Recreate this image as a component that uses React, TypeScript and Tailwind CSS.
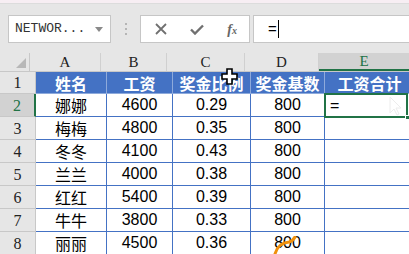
import React from "react";

const rows = [
  { name: "娜娜", pay: "4600", rate: "0.29", base: "800" },
  { name: "梅梅", pay: "4800", rate: "0.35", base: "800" },
  { name: "冬冬", pay: "4100", rate: "0.43", base: "800" },
  { name: "兰兰", pay: "4000", rate: "0.38", base: "800" },
  { name: "红红", pay: "5400", rate: "0.39", base: "800" },
  { name: "牛牛", pay: "3800", rate: "0.33", base: "800" },
  { name: "丽丽", pay: "4500", rate: "0.36", base: "800" },
];

const headers = ["姓名", "工资", "奖金比例", "奖金基数", "工资合计"];
const letters = ["A", "B", "C", "D", "E"];
const widths = ["w-[71px]", "w-[66px]", "w-[78px]", "w-[74px]", "w-[90px]"];

const cjk = { fontFamily: '"Noto Sans CJK SC", "Noto Sans", sans-serif' };
const mono = { fontFamily: '"Liberation Mono", "DejaVu Sans Mono", monospace' };
const serif = { fontFamily: '"Liberation Serif", "DejaVu Serif", serif' };
const arial = { fontFamily: '"Liberation Sans", Arial, sans-serif' };

function Toolbar() {
  return (
    <div className="h-[53px] bg-[#e6e6e6]">
      <div className="h-[4px] bg-[#f7eef3] border-b border-[#dcdcdc]" />
      <div className="flex items-start pt-[11px]">
        {/* name box */}
        <div className="ml-[8px] flex h-[28px] w-[103px] items-center justify-between border border-[#c6c6c6] bg-white pl-[6px] pr-[7px]">
          <span className="text-[13px] text-[#333]" style={mono}>
            NETWOR...
          </span>
          <svg width="8" height="5" viewBox="0 0 8 5">
            <path d="M0 0 L8 0 L4 5 Z" fill="#8a8a8a" />
          </svg>
        </div>
        {/* grip dots */}
        <div className="ml-[14px] mt-[8px] flex flex-col gap-[3px]">
          <span className="h-[2px] w-[2px] bg-[#b5b5b5]" />
          <span className="h-[2px] w-[2px] bg-[#b5b5b5]" />
          <span className="h-[2px] w-[2px] bg-[#b5b5b5]" />
        </div>
        {/* x / check / fx */}
        <div className="ml-[13px] flex h-[28px] w-[110px] items-center justify-between border border-[#c6c6c6] bg-white pl-[14px] pr-[12px]">
          <svg width="12" height="12" viewBox="0 0 12 12">
            <path d="M1 1 L11 11 M11 1 L1 11" stroke="#707070" strokeWidth="1.8" />
          </svg>
          <svg width="14" height="11" viewBox="0 0 14 11">
            <path d="M1 5.5 L5 9.5 L13 1.5" stroke="#707070" strokeWidth="2.4" fill="none" />
          </svg>
          <span className="text-[14px] font-bold italic text-[#666]" style={serif}>
            f<span className="text-[10px]">x</span>
          </span>
        </div>
        {/* formula bar */}
        <div className="ml-[3px] flex h-[28px] flex-1 items-center border border-r-0 border-[#c6c6c6] bg-white pl-[14px]">
          <span className="text-[15px] text-black" style={arial}>
            =
          </span>
          <span className="ml-[1px] h-[18px] w-[1px] bg-black" />
        </div>
      </div>
    </div>
  );
}

function ColumnHeader() {
  return (
    <div className="flex h-[19px] border-b border-[#c8c8c8] bg-[#e6e6e6]">
      <div className="relative w-[36px] border-r border-[#c8c8c8]">
        <svg className="absolute bottom-[3px] right-[3px]" width="10" height="10" viewBox="0 0 10 10">
          <path d="M10 0 L10 10 L0 10 Z" fill="#b8b8b8" />
        </svg>
      </div>
      {letters.map((l, i) => (
        <div
          key={l}
          className={`${widths[i]} flex shrink-0 items-center justify-center text-[15px] ${
            i === 4
              ? "border-b-2 border-[#217346] bg-[#d2d2d2] text-[#217346]"
              : "border-r border-[#d0d0d0] text-[#222]"
          }`}
          style={serif}
        >
          {l}
        </div>
      ))}
    </div>
  );
}

function RowNum({ n, active }: { n: number; active?: boolean }) {
  return (
    <div
      className={`flex w-[36px] shrink-0 items-end justify-center text-[16px] leading-[20px] ${
        active
          ? "border-r-2 border-[#217346] bg-[#d2d2d2] text-[#217346]"
          : "border-r border-[#c8c8c8] bg-[#e6e6e6] text-[#222]"
      } border-b border-b-[#c8c8c8]`}
      style={serif}
    >
      {n}
    </div>
  );
}

export default function App() {
  return (
    <div className="relative h-[254px] w-[409px] overflow-hidden bg-white">
      <Toolbar />
      <ColumnHeader />

      {/* row 1 */}
      <div className="flex h-[22px]">
        <RowNum n={1} />
        {headers.map((h, i) => (
          <div
            key={h}
            className={`${widths[i]} flex shrink-0 items-center justify-center border-b border-r border-[#8eaadb] bg-[#4472c4] text-[16px] font-bold text-white`}
            style={cjk}
          >
            {h}
          </div>
        ))}
      </div>

      {rows.map((r, idx) => (
        <div key={r.name} className="flex h-[23px]">
          <RowNum n={idx + 2} active={idx === 0} />
          <div
            className={`${widths[0]} flex shrink-0 items-center justify-center border-b border-r border-[#4472c4] text-[16px] text-black`}
            style={cjk}
          >
            {r.name}
          </div>
          {[r.pay, r.rate, r.base].map((v, j) => (
            <div
              key={j}
              className={`${widths[j + 1]} flex shrink-0 items-center justify-center border-b border-r border-[#4472c4] text-[16px] text-black`}
              style={arial}
            >
              {v}
            </div>
          ))}
          <div className={`${widths[4]} shrink-0 border-b border-r border-[#4472c4]`} />
        </div>
      ))}

      {/* active cell E2 */}
      <div className="absolute left-[324px] top-[93px] flex h-[25px] w-[84px] items-center border-2 border-[#217346] bg-white pl-[4px]">
        <span className="text-[16px] text-black" style={arial}>
          =
        </span>
        <svg className="absolute left-[52px] top-[1px]" width="26" height="20" viewBox="0 0 26 20">
          <path d="M12 1 L12 17 L16 13 L19 19 L21 18 L18 12 L23 12 Z" fill="none" stroke="#ececec" strokeWidth="1" />
        </svg>
        <span className="absolute -bottom-[4px] -right-[4px] h-[5px] w-[5px] border border-white bg-[#217346]" />
      </div>

      {/* cross cursor over C1 */}
      <svg className="absolute left-[221px] top-[68px]" width="17" height="17" viewBox="0 0 17 17">
        <path
          d="M6 1 H11 V6 H16 V11 H11 V16 H6 V11 H1 V6 H6 Z"
          fill="white"
          stroke="black"
          strokeWidth="1.6"
        />
      </svg>

      {/* orange stroke near D8 */}
      <svg className="absolute left-[272px] top-[236px]" width="28" height="18" viewBox="0 0 28 18">
        <path d="M3 18 Q6 7 17 6 Q21 5 23 1" fill="none" stroke="#f0900c" strokeWidth="3" strokeLinecap="round" />
      </svg>
    </div>
  );
}
